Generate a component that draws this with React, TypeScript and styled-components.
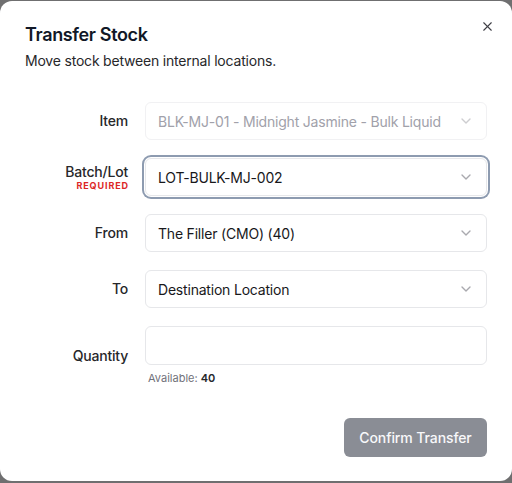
import React from "react";
import styled, { createGlobalStyle } from "styled-components";
import { ChevronDown, X } from "lucide-react";

const Global = createGlobalStyle`
  html, body { margin: 0; padding: 0; background: #6f6f70; }
  body { font-family: Inter, "Noto Sans", sans-serif; -webkit-font-smoothing: antialiased; letter-spacing: -0.2px; }
  * { box-sizing: border-box; }
`;

const Modal = styled.div`
  position: relative;
  margin-top: 1px;
  height: 480px;
  background: #ffffff;
  border-radius: 12px;
  padding: 22px 25px 0 25px;
`;

const Close = styled.button`
  position: absolute;
  top: 17px;
  right: 17px;
  border: none;
  background: transparent;
  padding: 0;
  width: 16px;
  height: 16px;
  display: flex;
  align-items: center;
  justify-content: center;
  color: #3f3f46;
  cursor: pointer;
`;

const Title = styled.h2`
  margin: 0;
  font-size: 18px;
  line-height: 24px;
  font-weight: 600;
  color: #111827;
  letter-spacing: -0.35px;
`;

const Subtitle = styled.p`
  margin: 4px 0 0 0;
  font-size: 14px;
  line-height: 20px;
  color: #27272a;
`;

const Form = styled.div`
  margin-top: 31px;
  display: grid;
  grid-template-columns: 103px 1fr;
  column-gap: 17px;
  row-gap: 18px;
  align-items: center;
`;

const Label = styled.div`
  text-align: right;
  font-size: 14px;
  line-height: 16px;
  font-weight: 500;
  color: #27272a;
`;

const Required = styled.div`
  font-size: 9px;
  line-height: 11px;
  font-weight: 700;
  color: #dc2626;
  letter-spacing: 0.9px;
  margin-right: -1px;
  text-transform: uppercase;
`;

const Select = styled.div<{ $disabled?: boolean; $focused?: boolean }>`
  height: 38px;
  display: flex;
  align-items: center;
  justify-content: space-between;
  padding: 0 12px;
  border: 1px solid ${(p) => (p.$disabled ? "#f1f1f3" : "#e6e7ea")};
  border-radius: 6px;
  background: #ffffff;
  font-size: 14px;
  color: ${(p) => (p.$disabled ? "#a1a1aa" : "#18181b")};
  box-shadow: ${(p) =>
    p.$focused ? "0 0 0 1px #ffffff, 0 0 0 3px #8d9bb0" : "none"};
  white-space: nowrap;
  overflow: hidden;
`;

const Chevron = styled(ChevronDown)<{ $disabled?: boolean }>`
  flex-shrink: 0;
  color: #71717a;
  opacity: ${(p) => (p.$disabled ? 0.35 : 0.6)};
`;

const Field = styled.div`
  display: flex;
  flex-direction: column;
`;

const Input = styled.input`
  height: 39px;
  width: 100%;
  border: 1px solid #e6e7ea;
  border-radius: 6px;
  background: #fff;
  padding: 0 12px;
  font: inherit;
  font-size: 14px;
  outline: none;
`;

const Helper = styled.div`
  margin-top: 6px;
  padding-left: 3px;
  font-size: 11px;
  line-height: 14px;
  color: #71717a;
  letter-spacing: 0;

  b {
    color: #27272a;
    font-weight: 600;
  }
`;

const Footer = styled.div`
  margin-top: 33px;
  display: flex;
  justify-content: flex-end;
`;

const Button = styled.button`
  height: 39px;
  width: 143px;
  padding: 0;
  border: none;
  border-radius: 6px;
  background: #8a8d95;
  color: #f8f8fa;
  font-family: inherit;
  letter-spacing: -0.1px;
  font-size: 14px;
  font-weight: 500;
`;

type Row = { label: string; value: string; required?: boolean; disabled?: boolean; focused?: boolean };

const rows: Row[] = [
  { label: "Item", value: "BLK-MJ-01 - Midnight Jasmine - Bulk Liquid", disabled: true },
  { label: "Batch/Lot", value: "LOT-BULK-MJ-002", required: true, focused: true },
  { label: "From", value: "The Filler (CMO) (40)" },
  { label: "To", value: "Destination Location" },
];

export default function App() {
  return (
    <>
      <Global />
      <Modal>
        <Close aria-label="Close">
          <X size={15} strokeWidth={1.8} />
        </Close>
        <Title>Transfer Stock</Title>
        <Subtitle>Move stock between internal locations.</Subtitle>
        <Form>
          {rows.map((r) => (
            <React.Fragment key={r.label}>
              <Label>
                {r.label}
                {r.required && <Required>Required</Required>}
              </Label>
              <Select $disabled={r.disabled} $focused={r.focused}>
                <span>{r.value}</span>
                <Chevron size={16} $disabled={r.disabled} />
              </Select>
            </React.Fragment>
          ))}
          <Label>Quantity</Label>
          <Field>
            <Input />
            <Helper>
              Available: <b>40</b>
            </Helper>
          </Field>
        </Form>
        <Footer>
          <Button disabled>Confirm Transfer</Button>
        </Footer>
      </Modal>
    </>
  );
}
